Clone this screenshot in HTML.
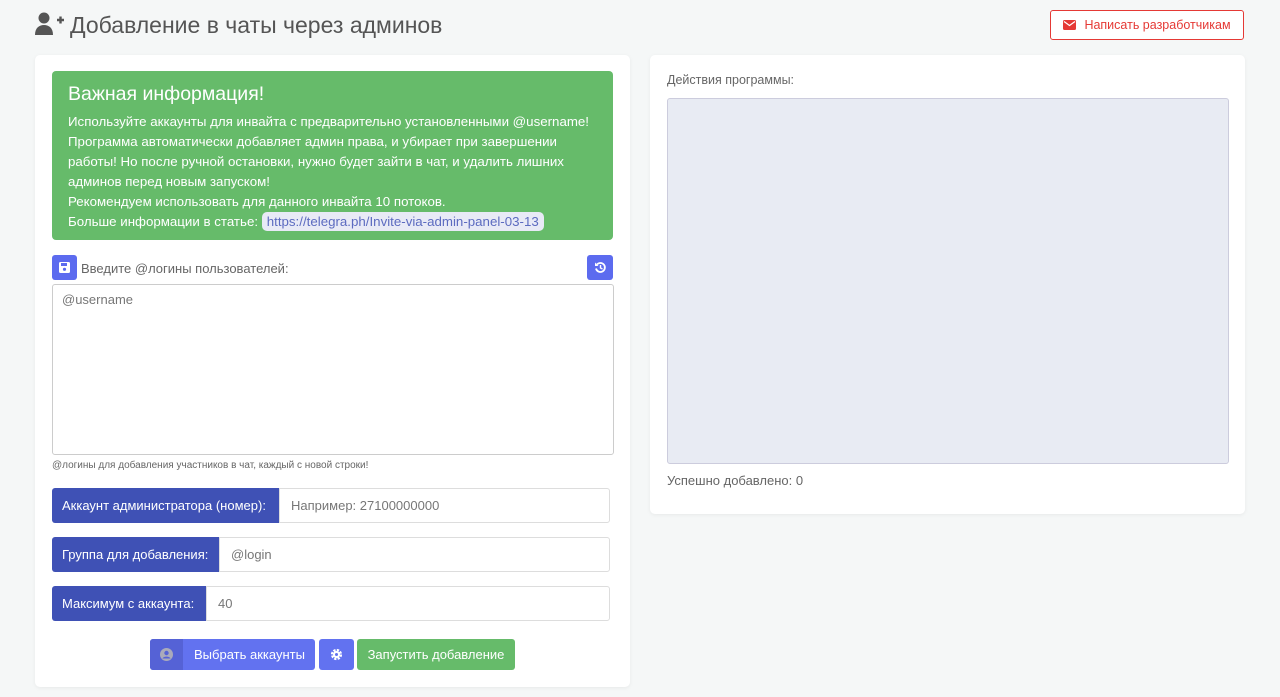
<!DOCTYPE html><html><head><meta charset="utf-8"><style>
body{margin:0;background:#f5f7f7;font-family:"Liberation Sans",sans-serif;width:1280px;height:697px;position:relative;overflow:hidden;color:#555}
.a{position:absolute}
.card{background:#fff;border-radius:5px;box-shadow:0 1px 4px rgba(0,0,0,.06)}
.alert{background:#66bb6a;border-radius:4px;color:#fff}
.lab{background:#3f51b5;color:#fff;font-size:13px;display:flex;align-items:center;padding-left:10px;box-sizing:border-box;border-radius:3px 0 0 3px}
.inp{border:1px solid #ddd;background:#fff;font-size:13px;color:#777;display:flex;align-items:center;padding-left:11px;box-sizing:border-box;border-radius:0 3px 3px 0}
.btn{border-radius:3px;font-size:13px;display:flex;align-items:center;justify-content:center;color:#fff}
</style></head><body>
<svg class="a" style="left:35px;top:12px" width="30" height="24" viewBox="0 0 30 24"><circle cx="9" cy="6" r="5.5" fill="#555"/><path d="M0 23c0-7 4-10 9-10s9 3 9 10z" fill="#555"/><path d="M22 8h7M25.5 4.5v7" stroke="#555" stroke-width="2.4"/></svg>
<div class="a" style="left:70px;top:12px;font-size:23px;color:#555">Добавление в чаты через админов</div>
<div class="a" style="left:1050px;top:10px;width:194px;height:30px;border:1px solid #e53935;border-radius:3px;box-sizing:border-box;color:#e53935;font-size:12.5px;display:flex;align-items:center;justify-content:center;background:#fff">
<svg width="13" height="10" viewBox="0 0 13 10" style="margin-right:8px"><rect width="13" height="10" rx="1.5" fill="#e53935"/><path d="M1 1.5l5.5 4 5.5-4" stroke="#fff" stroke-width="1.2" fill="none"/></svg>Написать разработчикам</div>
<div class="a card" style="left:35px;top:55px;width:595px;height:632px"></div>
<div class="a card" style="left:650px;top:55px;width:595px;height:459px"></div>
<div class="a alert" style="left:52px;top:71px;width:561px;height:169px"></div>
<div class="a" style="left:68px;top:83px;font-size:19.5px;color:#fff">Важная информация!</div>
<div class="a" style="left:68px;top:112px;font-size:13.3px;line-height:20px;color:#fff;width:545px;white-space:nowrap">Используйте аккаунты для инвайта с предварительно установленными @username!<br>Программа автоматически добавляет админ права, и убирает при завершении<br>работы! Но после ручной остановки, нужно будет зайти в чат, и удалить лишних<br>админов перед новым запуском!<br>Рекомендуем использовать для данного инвайта 10 потоков.<br>Больше информации в статье: <span style="background:#e8eaf6;color:#5c6bc0;border-radius:5px;padding:2px 5px">https://telegra.ph/Invite-via-admin-panel-03-13</span></div>
<div class="a btn" style="left:52px;top:255px;width:25px;height:25px;background:#5c6bef"><svg width="11" height="11" viewBox="0 0 11 11"><rect width="11" height="11" rx="1.5" fill="#fff"/><rect x="2" y="1" width="6" height="3" fill="#5c6bef"/><circle cx="5.5" cy="7.3" r="1.6" fill="#5c6bef"/></svg></div>
<div class="a" style="left:81px;top:261px;font-size:13px;color:#666">Введите @логины пользователей:</div>
<div class="a btn" style="left:587px;top:255px;width:26px;height:25px;background:#5c6bef"><svg width="13" height="13" viewBox="0 0 13 13"><path d="M3 3.5a4.5 4.5 0 1 1-1 4" stroke="#fff" stroke-width="1.8" fill="none"/><path d="M1 1.5v3.5h3.5z" fill="#fff"/><path d="M6.5 4v3l2 1" stroke="#fff" stroke-width="1.4" fill="none"/></svg></div>
<div class="a" style="left:52px;top:284px;width:562px;height:171px;border:1px solid #ccc;border-radius:3px;box-sizing:border-box;background:#fff"></div>
<div class="a" style="left:62px;top:292px;font-size:13px;color:#777">@username</div>
<div class="a" style="left:52px;top:460px;font-size:10px;color:#666">@логины для добавления участников в чат, каждый с новой строки!</div>
<div class="a lab" style="left:52px;top:488px;width:227px;height:35px">Аккаунт администратора (номер):</div>
<div class="a inp" style="left:279px;top:488px;width:331px;height:35px">Например: 27100000000</div>
<div class="a lab" style="left:52px;top:537px;width:167px;height:35px">Группа для добавления:</div>
<div class="a inp" style="left:219px;top:537px;width:391px;height:35px">@login</div>
<div class="a lab" style="left:52px;top:586px;width:154px;height:35px">Максимум с аккаунта:</div>
<div class="a inp" style="left:206px;top:586px;width:404px;height:35px">40</div>
<div class="a btn" style="left:150px;top:639px;width:165px;height:31px;background:#6272f0;justify-content:flex-start"><div style="width:33px;height:31px;background:#5562d6;border-radius:3px 0 0 3px;display:flex;align-items:center;justify-content:center"><svg width="13" height="13" viewBox="0 0 13 13"><circle cx="6.5" cy="6.5" r="6.5" fill="#aab"/><circle cx="6.5" cy="5" r="2.2" fill="#5562d6"/><path d="M2.5 10.5c1-2.5 7-2.5 8 0" fill="#5562d6"/></svg></div><span style="margin-left:11px">Выбрать аккаунты</span></div>
<div class="a btn" style="left:319px;top:639px;width:35px;height:31px;background:#6272f0"><svg width="13" height="13" viewBox="0 0 13 13"><circle cx="6.5" cy="6.5" r="4.3" fill="none" stroke="#fff" stroke-width="2.6" stroke-dasharray="2.2 1.2"/><circle cx="6.5" cy="6.5" r="3.5" fill="#fff"/><circle cx="6.5" cy="6.5" r="1.5" fill="#6272f0"/></svg></div>
<div class="a btn" style="left:357px;top:639px;width:158px;height:31px;background:#66bb6a">Запустить добавление</div>
<div class="a" style="left:667px;top:73px;font-size:12.5px;color:#666">Действия программы:</div>
<div class="a" style="left:667px;top:98px;width:562px;height:366px;background:#e8ebf3;border:1px solid #ccd;border-radius:3px;box-sizing:border-box"></div>
<div class="a" style="left:667px;top:473px;font-size:13px;color:#666">Успешно добавлено: 0</div>
</body></html>
